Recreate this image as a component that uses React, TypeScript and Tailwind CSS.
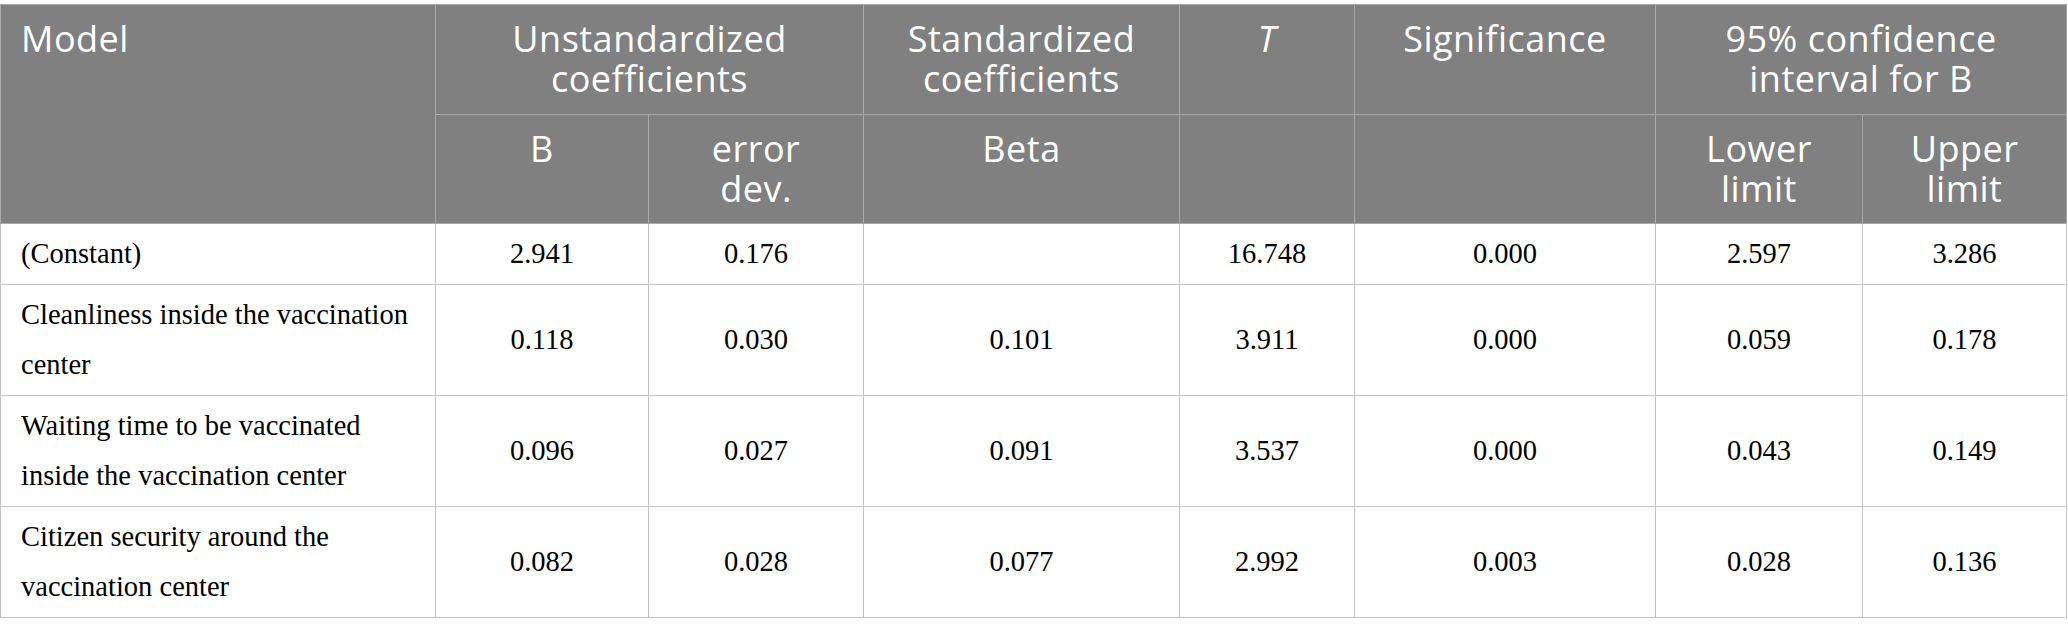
const rows = [
  { label: "(Constant)", values: ["2.941", "0.176", "", "16.748", "0.000", "2.597", "3.286"] },
  {
    label: "Cleanliness inside the vaccination center",
    values: ["0.118", "0.030", "0.101", "3.911", "0.000", "0.059", "0.178"],
  },
  {
    label: "Waiting time to be vaccinated inside the vaccination center",
    values: ["0.096", "0.027", "0.091", "3.537", "0.000", "0.043", "0.149"],
  },
  {
    label: "Citizen security around the vaccination center",
    values: ["0.082", "0.028", "0.077", "2.992", "0.003", "0.028", "0.136"],
  },
];

const colWidths = [435, 213, 215, 316, 175, 301, 207, 204];

const th =
  "border border-[#a7a8a7] px-5 pt-[14px] align-top text-center text-[36px] font-normal leading-[40px] tracking-[0.5px] text-white";
const td =
  "border border-[#c4c4c4] px-5 py-[5px] align-middle text-[28.5px] leading-[50px] text-black";

export default function App() {
  return (
    <div className="min-h-screen bg-white pt-[4px]">
      <table className="table-fixed border-collapse" style={{ width: 2066 }}>
        <colgroup>
          {colWidths.map((w, i) => (
            <col key={i} style={{ width: w }} />
          ))}
        </colgroup>
        <thead className="bg-[#7f807f] font-['Open_Sans',sans-serif]">
          <tr className="h-[110px]">
            <th rowSpan={2} className={`${th} text-left`}>
              Model
            </th>
            <th colSpan={2} className={th}>
              Unstandardized
              <br />
              coefficients
            </th>
            <th className={th}>
              Standardized
              <br />
              coefficients
            </th>
            <th className={th}>
              <i>T</i>
            </th>
            <th className={th}>Significance</th>
            <th colSpan={2} className={th}>
              95% confidence
              <br />
              interval for B
            </th>
          </tr>
          <tr className="h-[109px]">
            <th className={th}>B</th>
            <th className={th}>
              error
              <br />
              dev.
            </th>
            <th className={th}>Beta</th>
            <th className={th}></th>
            <th className={th}></th>
            <th className={th}>
              Lower
              <br />
              limit
            </th>
            <th className={th}>
              Upper
              <br />
              limit
            </th>
          </tr>
        </thead>
        <tbody className="font-['Liberation_Serif',serif]">
          {rows.map((row) => (
            <tr key={row.label}>
              <td className={`${td} text-left`}>{row.label}</td>
              {row.values.map((v, i) => (
                <td key={i} className={`${td} text-center`}>
                  {v}
                </td>
              ))}
            </tr>
          ))}
        </tbody>
      </table>
    </div>
  );
}
